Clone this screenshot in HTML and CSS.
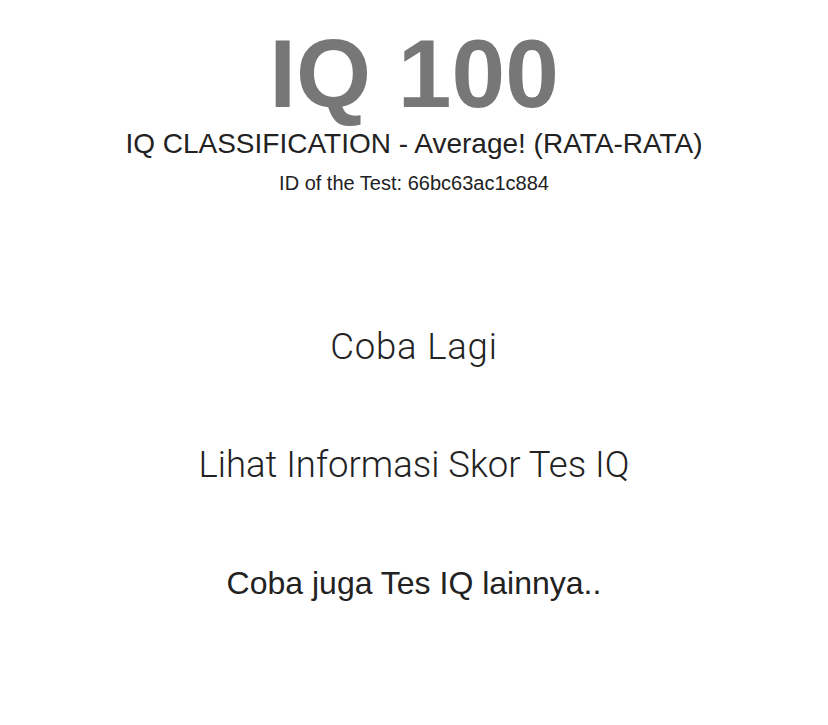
FILE: index.html
```html
<!DOCTYPE html>
<html lang="id">
<head>
<meta charset="utf-8">
<title>IQ 100</title>
<link rel="stylesheet" href="styles.css">
</head>
<body>
<main class="result">
  <h1 class="score">IQ 100</h1>
  <p class="classification">IQ CLASSIFICATION - Average! (RATA-RATA)</p>
  <p class="test-id">ID of the Test: 66bc63ac1c884</p>
  <nav class="actions">
    <a class="action action-light action-short" href="#">Coba Lagi</a>
    <a class="action action-light" href="#">Lihat Informasi Skor Tes IQ</a>
    <a class="action action-regular" href="#">Coba juga Tes IQ lainnya..</a>
  </nav>
</main>
</body>
</html>
```

FILE: styles.css
```css
html, body {
  margin: 0;
  padding: 0;
  background: #ffffff;
}

body {
  font-family: "Liberation Sans", Arial, sans-serif;
  color: #222222;
}

.result {
  display: flex;
  flex-direction: column;
  align-items: center;
  padding-top: 24px;
}

.score {
  margin: 0;
  font-size: 96.5px;
  line-height: 100px;
  font-weight: 700;
  color: #777777;
}

.classification {
  margin: 5px 0 0;
  font-size: 28px;
  line-height: 30px;
  color: #222222;
}

.test-id {
  margin: 12px 0 0;
  font-size: 20px;
  line-height: 24px;
  color: #222222;
}

.actions {
  display: flex;
  flex-direction: column;
  align-items: center;
  gap: 78px;
  margin-top: 132px;
}

.action {
  text-decoration: none;
  color: #222222;
  line-height: 40px;
}

.action-light {
  font-family: Roboto, "Liberation Sans", sans-serif;
  font-weight: 300;
  font-size: 36.5px;
}

.action-short {
  letter-spacing: 0.8px;
}

.action-regular {
  font-size: 32px;
}
```
